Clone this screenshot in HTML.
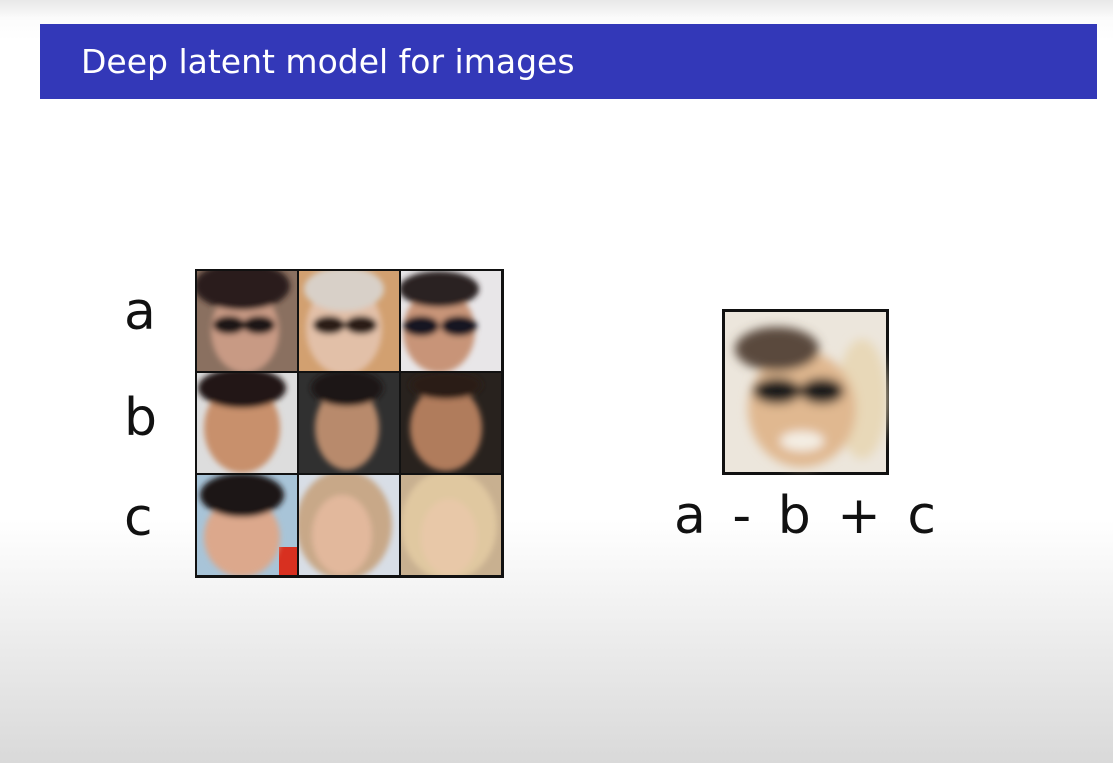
<!DOCTYPE html>
<html><head><style>
html,body{margin:0;padding:0}
body{width:1113px;height:763px;position:relative;overflow:hidden;font-family:"DejaVu Sans","Liberation Sans",sans-serif;
background:linear-gradient(#e8e8e8 0px,#fbfbfb 18px,#ffffff 40px,#ffffff 520px,#ececec 640px,#d9d9d9 763px);}
.bar{position:absolute;left:40px;top:24px;width:1057px;height:75px;background:#3338b8;}
.bar span{position:absolute;left:41px;top:18px;color:#fff;font-size:33px;font-family:"DejaVu Sans",sans-serif;}
.lbl{position:absolute;font-size:52px;color:#111;}
</style></head><body>
<div class="bar"><span>Deep latent model for images</span></div>
<div class="lbl" style="left:124px;top:282px">a</div>
<div class="lbl" style="left:124px;top:388px">b</div>
<div class="lbl" style="left:124px;top:488px">c</div>
<div class="lbl" style="left:674px;top:486px;word-spacing:8px;letter-spacing:1px">a - b + c</div>

<svg style="position:absolute;left:195px;top:269px" width="309" height="309" viewBox="0 0 309 309">
<defs><filter id="b"><feGaussianBlur stdDeviation="3"/></filter>
<clipPath id="c"><rect width="100" height="100"/></clipPath></defs>
<rect width="309" height="309" fill="#111"/>
<g transform="translate(2,2)" clip-path="url(#c)"><rect width="100" height="100" fill="#8a7060"/><g filter="url(#b)"><ellipse cx="48" cy="60" rx="34" ry="42" fill="#c89a84"/><ellipse cx="45" cy="15" rx="48" ry="24" fill="#2a1e1a"/><ellipse cx="32" cy="54" rx="16" ry="9" fill="#1a1414"/><ellipse cx="62" cy="54" rx="16" ry="9" fill="#1a1414"/></g></g>
<g transform="translate(104,2)" clip-path="url(#c)"><rect width="100" height="100" fill="#d2a070"/><g filter="url(#b)"><ellipse cx="45" cy="58" rx="38" ry="46" fill="#e2c0a8"/><ellipse cx="45" cy="18" rx="40" ry="22" fill="#d8d0c8"/><ellipse cx="30" cy="54" rx="16" ry="9" fill="#2a1d18"/><ellipse cx="62" cy="54" rx="16" ry="9" fill="#2a1d18"/></g></g>
<g transform="translate(206,2)" clip-path="url(#c)"><rect width="100" height="100" fill="#e8e6e8"/><g filter="url(#b)"><ellipse cx="38" cy="60" rx="36" ry="42" fill="#c89478"/><ellipse cx="38" cy="18" rx="40" ry="18" fill="#2a2020"/><ellipse cx="20" cy="55" rx="18" ry="10" fill="#141820"/><ellipse cx="58" cy="55" rx="18" ry="10" fill="#141820"/></g></g>
<g transform="translate(2,104)" clip-path="url(#c)"><rect width="100" height="100" fill="#ddd"/><g filter="url(#b)"><ellipse cx="45" cy="55" rx="38" ry="45" fill="#c8906c"/><ellipse cx="45" cy="15" rx="44" ry="20" fill="#201814"/></g></g>
<g transform="translate(104,104)" clip-path="url(#c)"><rect width="100" height="100" fill="#303030"/><g filter="url(#b)"><ellipse cx="48" cy="55" rx="32" ry="42" fill="#b88a6c"/><ellipse cx="48" cy="15" rx="36" ry="18" fill="#1c1614"/></g></g>
<g transform="translate(206,104)" clip-path="url(#c)"><rect width="100" height="100" fill="#28221e"/><g filter="url(#b)"><ellipse cx="45" cy="55" rx="36" ry="43" fill="#b07c5c"/><ellipse cx="45" cy="12" rx="36" ry="14" fill="#2a1e18"/></g></g>
<g transform="translate(2,206)" clip-path="url(#c)"><rect width="100" height="100" fill="#a8c4d8"/><rect x="82" y="72" width="18" height="28" fill="#d83020"/><g filter="url(#b)"><ellipse cx="45" cy="62" rx="38" ry="40" fill="#dca88c"/><ellipse cx="45" cy="20" rx="42" ry="22" fill="#1e1614"/></g></g>
<g transform="translate(104,206)" clip-path="url(#c)"><rect width="100" height="100" fill="#d8dee6"/><g filter="url(#b)"><ellipse cx="45" cy="50" rx="48" ry="55" fill="#c8a888"/><ellipse cx="43" cy="60" rx="30" ry="40" fill="#e2b89c"/></g></g>
<g transform="translate(206,206)" clip-path="url(#c)"><rect width="100" height="100" fill="#c8b090"/><g filter="url(#b)"><ellipse cx="48" cy="50" rx="48" ry="55" fill="#e0c8a0"/><ellipse cx="48" cy="62" rx="28" ry="38" fill="#e8c8a8"/></g></g>
</svg>

<svg style="position:absolute;left:722px;top:309px" width="167" height="166" viewBox="0 0 167 166">
<defs><filter id="b2"><feGaussianBlur stdDeviation="5"/></filter></defs>
<rect width="167" height="166" fill="#111"/>
<rect x="3" y="3" width="161" height="160" fill="#ece6dc"/>
<g filter="url(#b2)">
<ellipse cx="140" cy="90" rx="25" ry="60" fill="#e8d8b8"/>
<ellipse cx="80" cy="100" rx="54" ry="58" fill="#e0b890"/>
<ellipse cx="55" cy="40" rx="42" ry="22" fill="#5a4a3c"/>
<ellipse cx="55" cy="82" rx="24" ry="13" fill="#1e1a1a"/>
<ellipse cx="100" cy="82" rx="22" ry="13" fill="#1e1a1a"/>
<ellipse cx="80" cy="132" rx="22" ry="10" fill="#f4eee4"/>
</g>
</svg>
</body></html>
